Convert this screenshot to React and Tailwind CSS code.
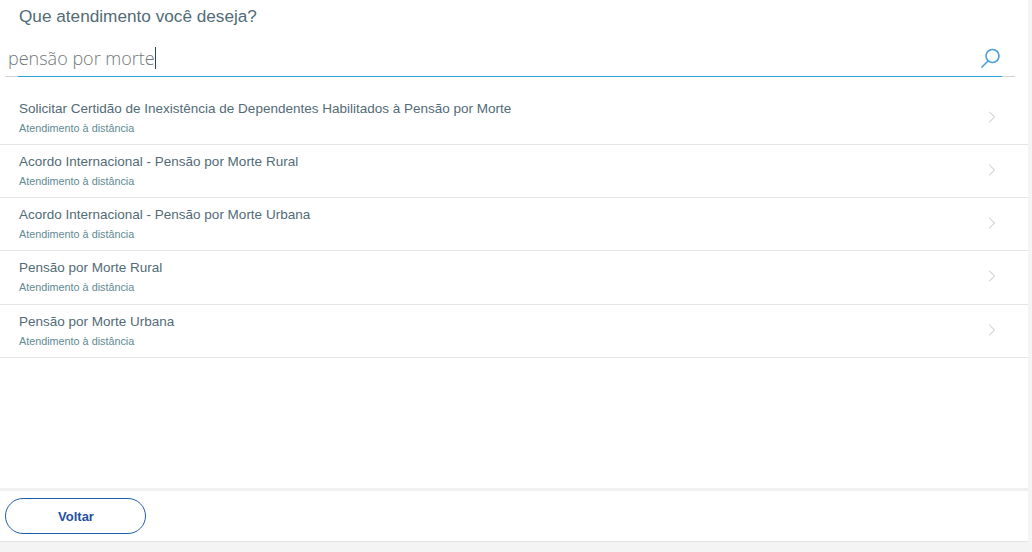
import React from "react";
import { ChevronRight } from "lucide-react";

const services = [
  "Solicitar Certidão de Inexistência de Dependentes Habilitados à Pensão por Morte",
  "Acordo Internacional - Pensão por Morte Rural",
  "Acordo Internacional - Pensão por Morte Urbana",
  "Pensão por Morte Rural",
  "Pensão por Morte Urbana",
];

const ServiceRow = ({ title }) => (
  <div className="h-[53.25px] flex items-center justify-between pl-[19px] pr-[26px] border-b border-[#e3e5e6]">
    <div className="pb-[1px]">
      <p className="text-[13.5px] leading-[18px] text-[#526b76]">{title}</p>
      <p className="mt-[3px] text-[10.8px] leading-[14px] text-[#5f8a94]">
        Atendimento à distância
      </p>
    </div>
    <ChevronRight className="w-5 h-5 mb-[2px] text-[#c9cccd]" strokeWidth={1.25} />
  </div>
);

export default function App() {
  return (
    <div className="h-[552px] w-[1032px] overflow-hidden flex flex-col bg-[#f4f4f4] font-['Liberation_Sans',Arial,sans-serif]">
      <div className="mr-[4px] flex-1 flex flex-col bg-white min-h-0">
        <main className="flex-1">
          <h1 className="pl-[19px] pt-[7px] text-[17.2px] leading-[19px] text-[#526b76]">
            Que atendimento você deseja?
          </h1>
          <div className="mt-[12px] ml-[5px] mr-[13px] h-[39px] relative border-b border-[#cfd2d4]">
            <div className="pl-[3px] pt-[8px] flex items-center font-['Open_Sans',sans-serif] font-light text-[18px] leading-[24px] text-[#70777b]">
              <span>pensão por morte</span>
              <span className="w-px h-[22px] bg-[#2c4657]"></span>
            </div>
            <div className="absolute left-[13px] right-[13px] -bottom-px h-px bg-[#2aa3dc]"></div>
            <svg
              className="absolute right-[14px] top-[10px] w-[22px] h-[22px] text-[#4a9fe0]"
              viewBox="0 0 22 22"
              fill="none"
              stroke="currentColor"
            >
              <circle cx="13.5" cy="8" r="6.5" strokeWidth="1.6" />
              <path d="M9 13 L2.5 19.5" strokeWidth="1.6" />
            </svg>
          </div>
          <div className="mt-[14.5px]">
            {services.map((title) => (
              <ServiceRow key={title} title={title} />
            ))}
          </div>
        </main>
        <footer className="h-[54px] flex items-center pl-[5px] border-t-[3px] border-[#f0f0f0] border-b border-b-[#e4e4e4]">
          <button className="w-[141px] h-[36px] pt-[1px] pl-[1px] rounded-full border border-[#1d5ea8] bg-white text-[13px] font-bold text-[#2450a0]">
            Voltar
          </button>
        </footer>
      </div>
      <div className="h-[10px]"></div>
    </div>
  );
}
